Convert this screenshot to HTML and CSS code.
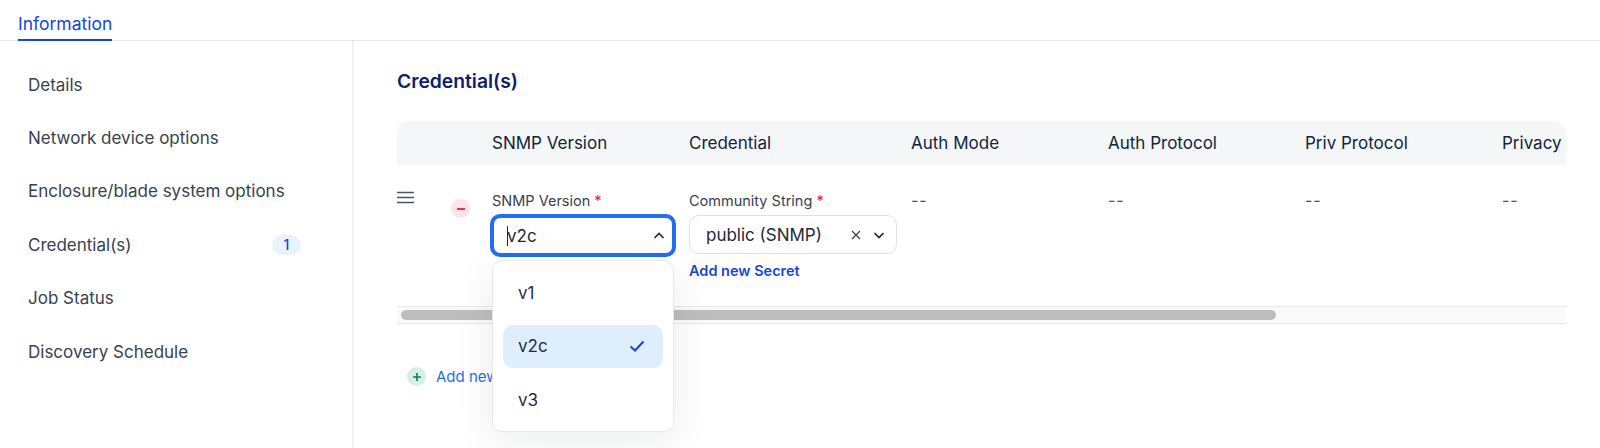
FILE: index.html
```html
<!DOCTYPE html>
<html lang="en">
<head>
<meta charset="utf-8">
<title>Credentials</title>
<link rel="stylesheet" href="styles.css">
</head>
<body>
<header class="tabs"><span class="tab">Information</span></header>
<div class="layout">
  <nav class="side">
    <a class="side-item">Details</a>
    <a class="side-item">Network device options</a>
    <a class="side-item">Enclosure/blade system options</a>
    <a class="side-item">Credential(s)<span class="count">1</span></a>
    <a class="side-item">Job Status</a>
    <a class="side-item">Discovery Schedule</a>
  </nav>
  <main class="main">
    <h2 class="title">Credential(s)</h2>
    <div class="table-wrap">
      <div class="thead">
        <div class="c-handle"></div><div class="c-rm"></div>
        <div class="c c1">SNMP Version</div><div class="c c2">Credential</div><div class="c c3">Auth Mode</div><div class="c c4">Auth Protocol</div><div class="c c5">Priv Protocol</div><div class="c c6">Privacy</div>
      </div>
      <div class="trow">
        <div class="c-handle"><svg class="menu-icon" width="18" height="14" viewBox="0 0 18 14"><path d="M0 1.5h17M0 6.5h17M0 11.5h17" stroke="#4b5563" stroke-width="1.4" fill="none"/></svg></div>
        <div class="c-rm"><span class="round rm"><svg width="8" height="2" viewBox="0 0 8 2"><path d="M0 1h8" stroke="#e0354b" stroke-width="2"/></svg></span></div>
        <div class="c c1">
          <div class="lbl">SNMP Version <b>*</b></div>
          <div class="select focus"><span class="caret"></span><span class="typed">v2c</span><svg class="chev" width="12" height="8" viewBox="0 0 12 8"><path d="M1.5 6l4.5-4.5L10.500 6" fill="none" stroke="#1f2937" stroke-width="1.700"/></svg></div>
        </div>
        <div class="c c2">
          <div class="lbl">Community String <b>*</b></div>
          <div class="select cred"><span class="val">public (SNMP)</span><svg class="x" width="10" height="10" viewBox="0 0 10 10"><path d="M1 1l8 8M9 1l-8 8" stroke="#374151" stroke-width="1.200"/></svg><svg class="chev" width="12" height="8" viewBox="0 0 12 8"><path d="M1.500 2L6 6.500 10.500 2" fill="none" stroke="#1f2937" stroke-width="1.700"/></svg></div>
          <a class="secret">Add new Secret</a>
        </div>
        <div class="c c3 dash">--</div><div class="c c4 dash">--</div><div class="c c5 dash">--</div><div class="c c6 dash">--</div>
      </div>
      <div class="scroll"><div class="thumb"></div></div>
    </div>
    <div class="add"><span class="round plus"><svg width="8" height="8" viewBox="0 0 8 8"><path d="M4 0v8M0 4h8" stroke="#0f7a55" stroke-width="1.600"/></svg></span><span class="add-text">Add new</span></div>
    <div class="menu">
      <div class="opt">v1</div>
      <div class="opt sel">v2c<svg width="16" height="12" viewBox="0 0 16 12"><path d="M1.500 6.500l4.500 4L14.500 1.500" fill="none" stroke="#1546d8" stroke-width="2"/></svg></div>
      <div class="opt">v3</div>
    </div>
  </main>
</div>
</body>
</html>
```
FILE: styles.css
```css
* { box-sizing: border-box; }
html, body { margin: 0; height: 448px; overflow: hidden; }
body { background: #fff; font-family: Inter, "Liberation Sans", sans-serif; color: #1f2937; }
.tabs { height: 41px; border-bottom: 1px solid #e3e7ec; padding-left: 18px; display: flex; align-items: flex-end; }
.tab { height: 40px; margin-bottom: -1px; padding-top: 13px; line-height: 20px; font-size: 17.500px; color: #1546d8; border-bottom: 2px solid #1546d8; }
.layout { display: flex; height: 407px; }
.side { width: 354px; flex: none; border-right: 2px solid #eef2f6; padding: 17px 51px 0 28px; }
.side-item { display: flex; justify-content: space-between; align-items: center; height: 53.400px; font-size: 17px; color: #374151; }
.count { width: 29px; height: 20px; border-radius: 10px; background: #e9f2fd; color: #1546d8; font-size: 14px; font-weight: 500; display: flex; align-items: center; justify-content: center; }
.main { position: relative; flex: 1; padding: 27px 0 0 43px; }
.title { margin: 0; font-size: 19.300px; line-height: 26px; font-weight: 600; color: #0f1f6b; }
.table-wrap { width: 1169px; margin-top: 27px; overflow: hidden; }
.thead { height: 44px; display: flex; align-items: center; background: #f5f6f8; border-radius: 12px 12px 0 0; font-size: 17px; color: #10253f; }
.trow { height: 141px; display: flex; align-items: flex-start; padding-top: 27px; }
.c-handle { width: 54px; flex: none; }
.c-rm { width: 41px; flex: none; }
.c { flex: none; white-space: nowrap; }
.c1 { width: 197px; } .c2 { width: 222px; } .c3 { width: 197px; } .c4 { width: 197px; } .c5 { width: 197px; } .c6 { width: 60px; }
.menu-icon { display: block; margin-top: -1px; }
.round { display: flex; align-items: center; justify-content: center; width: 19px; height: 19px; border-radius: 50%; }
.rm { background: #fde3e7; margin-top: 7px; }
.lbl { font-size: 14.500px; line-height: 18px; color: #374151; }
.lbl b { color: #dc2626; font-weight: 400; }
.dash { font-size: 16px; line-height: 20px; color: #4b5563; letter-spacing: 1px; margin-top: -2px; }
.select { margin-top: 6px; display: flex; align-items: center; background: #fff; font-size: 17px; }
.focus { width: 186px; height: 43px; margin-left: -2px; margin-top: 4px; border: 4px solid #1f6ff0; border-radius: 10px; padding: 0 7px 0 13px; }
.caret { width: 1px; height: 20px; background: #1f2937; margin-right: -1px; }
.typed { padding-top: 1px; }
.focus .chev { margin-left: auto; }
.cred { width: 208px; height: 39px; margin-top: 5px; border: 1px solid #dde1e7; border-radius: 10px; padding: 0 11px 0 16px; }
.cred .val { flex: 1; }
.cred .x { margin-right: 12px; }
.secret { display: block; margin-top: 8px; font-size: 14.500px; line-height: 18px; font-weight: 600; color: #1546d8; }
.scroll { height: 18px; background: #fafafa; border-top: 1px solid #e8e8e8; border-bottom: 1px solid #e8e8e8; padding: 3px 4px; }
.thumb { width: 875px; height: 10px; border-radius: 5px; background: #bdbdbd; }
.add { display: flex; align-items: center; margin-top: 43px; padding-left: 10px; }
.plus { background: #d6f0e8; }
.add-text { margin-left: 10px; font-size: 15px; color: #1f6ff0; }
.menu { position: absolute; left: 138px; top: 219px; width: 182px; height: 172px; background: #fff; border: 1px solid #e6e9ee; border-radius: 10px; padding: 10px; box-shadow: 0 10px 40px rgba(17,24,39,.08); }
.opt { height: 43.500px; margin-bottom: 10px; display: flex; align-items: center; justify-content: space-between; padding: 0 18px 0 15px; font-size: 17px; color: #1f2f46; border-radius: 10px; }
.sel { background: #deeefc; }
```
